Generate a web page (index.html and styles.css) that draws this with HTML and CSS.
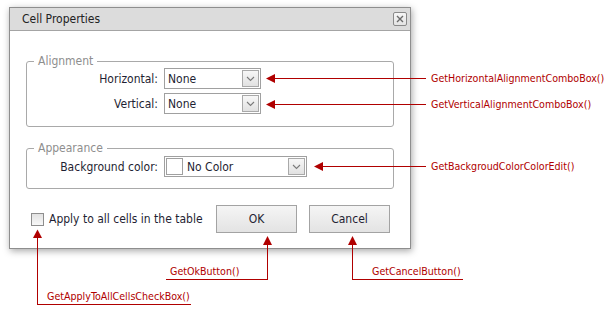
FILE: index.html
```html
<!DOCTYPE html>
<html>
<head>
<meta charset="utf-8">
<link rel="stylesheet" href="styles.css">
</head>
<body>
<div class="stage">
  <div class="dialog">
    <div class="titlebar">
      <span class="title">Cell Properties</span>
      <span class="close">
        <svg width="8" height="8" viewBox="0 0 8 8"><path d="M1 1L7 7M7 1L1 7" stroke="#6b6b6b" stroke-width="1.4" fill="none"/></svg>
      </span>
    </div>
    <div class="content">
      <fieldset class="group group-align">
        <legend>Alignment</legend>
        <div class="form-grid">
          <label class="field-label">Horizontal:</label>
          <div class="combo combo-short">
            <span class="combo-text">None</span>
            <span class="drop"><svg width="9" height="6" viewBox="0 0 9 6"><path d="M1 1L4.5 4.5L8 1" stroke="#7a7a7a" stroke-width="1.1" fill="none"/></svg></span>
          </div>
          <label class="field-label">Vertical:</label>
          <div class="combo combo-short">
            <span class="combo-text">None</span>
            <span class="drop"><svg width="9" height="6" viewBox="0 0 9 6"><path d="M1 1L4.5 4.5L8 1" stroke="#7a7a7a" stroke-width="1.1" fill="none"/></svg></span>
          </div>
        </div>
      </fieldset>
      <fieldset class="group group-appear">
        <legend>Appearance</legend>
        <div class="form-grid">
          <label class="field-label">Background color:</label>
          <div class="combo combo-long">
            <span class="swatch"></span>
            <span class="combo-text">No Color</span>
            <span class="drop"><svg width="9" height="6" viewBox="0 0 9 6"><path d="M1 1L4.5 4.5L8 1" stroke="#7a7a7a" stroke-width="1.1" fill="none"/></svg></span>
          </div>
        </div>
      </fieldset>
      <div class="footer">
        <label class="check"><span class="check-box"></span><span>Apply to all cells in the table</span></label>
        <div class="buttons">
          <span class="btn">OK</span>
          <span class="btn">Cancel</span>
        </div>
      </div>
    </div>
  </div>

  <svg class="callouts" width="605" height="309" viewBox="0 0 605 309">
    <g stroke="#b00000" stroke-width="1" fill="none" shape-rendering="crispEdges">
      <path d="M274 78.5H426"/>
      <path d="M274 104.5H426"/>
      <path d="M322 166.5H426"/>
      <path d="M37.5 237V304.5H191"/>
      <path d="M267.5 244V279.5H166"/>
      <path d="M352.5 244V279.5H463"/>
    </g>
    <g fill="#b00000">
      <path d="M266 78.5L275 74V83Z"/>
      <path d="M266 104.5L275 100V109Z"/>
      <path d="M314 166.5L323 162V171Z"/>
      <path d="M37.5 229.5L42 238H33Z"/>
      <path d="M267.5 236L272 245H263Z"/>
      <path d="M352.5 236L357 245H348Z"/>
    </g>
  </svg>
  <span class="callout callout-h">GetHorizontalAlignmentComboBox()</span>
  <span class="callout callout-v">GetVerticalAlignmentComboBox()</span>
  <span class="callout callout-bg">GetBackgroudColorColorEdit()</span>
  <span class="callout callout-ok">GetOkButton()</span>
  <span class="callout callout-cancel">GetCancelButton()</span>
  <span class="callout callout-check">GetApplyToAllCellsCheckBox()</span>
</div>
</body>
</html>
```

FILE: styles.css
```css
html, body {
  margin: 0;
  padding: 0;
  background: #ffffff;
}
body {
  font-family: "DejaVu Sans Condensed", "DejaVu Sans", sans-serif;
  font-size: 12px;
  color: #1f1f33;
}
.stage {
  position: relative;
  width: 605px;
  height: 309px;
  overflow: hidden;
  padding: 7px 0 0 9px;
  box-sizing: border-box;
}
.dialog {
  width: 400px;
  border: 1px solid #8e8e8e;
  background: #ffffff;
  box-shadow: 1px 2px 7px rgba(0, 0, 0, 0.35);
}
.titlebar {
  height: 22px;
  background: #dcdcdc;
  border-bottom: 1px solid #a4a4a4;
  display: flex;
  align-items: center;
  justify-content: space-between;
  padding: 0 3px 0 12px;
}
.title {
  font-size: 12px;
  color: #222222;
  line-height: 16px;
}
.close {
  width: 12px;
  height: 12px;
  border: 1px solid #8a8a8a;
  border-radius: 2px;
  background: linear-gradient(#f6f6f6, #e4e4e4);
  display: flex;
  align-items: center;
  justify-content: center;
}
.close svg { display: block; }
.content {
  padding: 23px 16px 15px 16px;
}
.group {
  margin: 0;
  padding: 0 0 12px 0;
  border: 1px solid #a9a9a9;
  border-radius: 3px;
  min-width: 0;
}
.group legend {
  margin-left: 7px;
  padding: 0 4px;
  color: #8e8e8e;
  line-height: 14px;
  font-size: 12px;
}
.group-appear {
  margin-top: 14px;
  padding-top: 1px;
  padding-bottom: 11px;
}
.form-grid {
  display: grid;
  grid-template-columns: 131px auto;
  column-gap: 6px;
  row-gap: 4px;
  justify-content: start;
  align-items: center;
}
.field-label {
  text-align: right;
  line-height: 14px;
}
.combo {
  height: 19px;
  border: 1px solid #a0a0a0;
  background: #ffffff;
  display: flex;
  align-items: center;
  padding: 0 1px 0 3px;
}
.combo-short { width: 91px; }
.combo-long { width: 139px; padding-left: 1px; }
.combo-text {
  flex: 1;
  line-height: 14px;
}
.swatch {
  width: 15px;
  height: 15px;
  border: 1px solid #a0a0a0;
  margin-right: 4px;
}
.drop {
  width: 15px;
  height: 15px;
  border: 1px solid #a9a9a9;
  background: linear-gradient(#f7f7f7, #e1e1e1);
  display: flex;
  align-items: center;
  justify-content: center;
}
.drop svg { display: block; }
.footer {
  margin-top: 16px;
  display: flex;
  align-items: center;
  justify-content: space-between;
  padding: 0 4px 0 5px;
}
.check {
  display: flex;
  align-items: center;
  gap: 5px;
  line-height: 14px;
}
.check-box {
  width: 11px;
  height: 11px;
  border: 1px solid #8e8e8e;
  background: linear-gradient(#e2e2e2, #f8f8f8);
}
.buttons {
  display: flex;
  gap: 12px;
}
.btn {
  width: 79px;
  height: 26px;
  border: 1px solid #a3a3a3;
  background: linear-gradient(#f5f5f5, #e3e3e3);
  display: flex;
  align-items: center;
  justify-content: center;
  line-height: 14px;
}
.callouts {
  position: absolute;
  left: 0;
  top: 0;
}
.callout {
  position: absolute;
  font-size: 10.6px;
  line-height: 13px;
  color: #b00000;
  white-space: nowrap;
}
.callout-h { left: 431px; top: 72px; }
.callout-v { left: 431px; top: 98px; }
.callout-bg { left: 431px; top: 160px; }
.callout-ok { left: 170px; top: 265px; }
.callout-cancel { left: 372px; top: 265px; }
.callout-check { left: 47px; top: 290px; }
```
